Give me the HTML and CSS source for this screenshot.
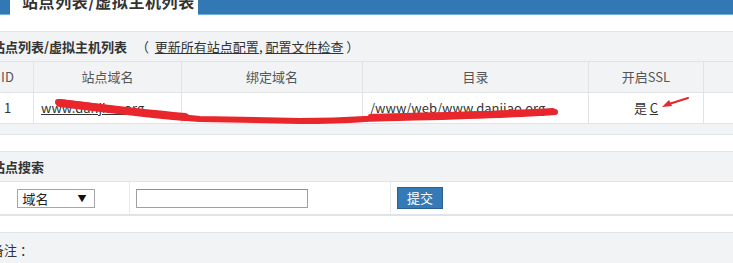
FILE: index.html
```html
<!DOCTYPE html>
<html lang="zh-CN">
<head>
<meta charset="utf-8">
<title>站点列表/虚拟主机列表</title>
<link rel="stylesheet" href="styles.css">
</head>
<body>
<div class="page">
  <div class="topbar">
    <div class="tab">站点列表/虚拟主机列表</div>
  </div>
  <div class="spacer"></div>

  <section class="panel list-panel">
    <div class="panel-title">
      <b>站点列表/虚拟主机列表</b>
      <span class="ops">（&nbsp;&nbsp;<a href="#">更新所有站点配置</a>, <a href="#">配置文件检查</a> ）</span>
    </div>
    <div class="grid">
      <div class="cell head c">ID</div>
      <div class="cell head c">站点域名</div>
      <div class="cell head c">绑定域名</div>
      <div class="cell head c">目录</div>
      <div class="cell head c">开启SSL</div>
      <div class="cell head c"></div>
      <div class="cell data c">1</div>
      <div class="cell data"><a href="#">www.danjiao.org</a></div>
      <div class="cell data"></div>
      <div class="cell data">/www/web/www.danjiao.org</div>
      <div class="cell data c">是 <a href="#">C</a></div>
      <div class="cell data"></div>
    </div>
  </section>

  <div class="spacer2"></div>

  <section class="panel search-panel">
    <div class="panel-title"><b>站点搜索</b></div>
    <div class="search-row">
      <div class="scell sel-cell">
        <div class="select"><span>域名</span><span class="caret">▼</span></div>
      </div>
      <div class="scell"><div class="input"></div></div>
      <div class="scell"><button class="btn" type="button">提交</button></div>
    </div>
  </section>

  <div class="spacer3"></div>

  <section class="panel note-panel">
    <div class="note-title">备注 ：</div>
  </section>
</div>

<svg class="marks" width="733" height="263" viewBox="0 0 733 263" aria-hidden="true">
  <path d="M58,102 C105,107 150,115 200,119 L300,121 C330,121 350,120 365,119 C430,117 500,116 555,112" fill="none" stroke="#e8262b" stroke-width="6" stroke-linecap="round"/>
  <path d="M60,103 C100,108 140,113 185,117" fill="none" stroke="#e8262b" stroke-width="8" stroke-linecap="round"/>
  <path d="M370,116 C440,114 500,113 553,110" fill="none" stroke="#e8262b" stroke-width="4" stroke-linecap="round"/>
  <path d="M669,104 L688,98" fill="none" stroke="#e8262b" stroke-width="2" stroke-linecap="round"/>
  <polygon points="662,107 669,100 672,106" fill="#e8262b"/>
</svg>
</body>
</html>
```

FILE: styles.css
```css
html, body {
  margin: 0;
  padding: 0;
  background: #ffffff;
  overflow: hidden;
}

body {
  font-family: "Noto Sans CJK SC", "Noto Sans", sans-serif;
  font-size: 13px;
  color: #333;
  position: relative;
  width: 733px;
  height: 263px;
}

a {
  color: #333;
  text-decoration: underline;
}

.page {
  margin: -22px 0 0 -18px;
  width: 800px;
}

.topbar {
  height: 36px;
  background: #3278b4;
  border-bottom: 1px solid #6fb0d8;
  display: flex;
  align-items: flex-end;
}

.tab {
  margin-left: 28px;
  width: 188px;
  height: 37px;
  margin-bottom: -1px;
  box-sizing: border-box;
  background: #fff;
  padding: 14px 0 0 12px;
  font-size: 16px;
  line-height: 18px;
  font-weight: bold;
  color: #333;
  letter-spacing: 0.6px;
}

.spacer { height: 16px; }

.panel {
  background: #f2f3f5;
  border-top: 1px solid #e2e3e5;
}

.panel-title {
  height: 29px;
  line-height: 29px;
  padding-left: 10px;
  color: #333;
  display: flex;
  align-items: center;
}

.panel-title b {
  font-weight: bold;
}

.ops {
  margin-left: 9px;
}

.ops a { color: #333; }

.list-panel {
  padding-bottom: 10px;
  border-bottom: 1px solid #e2e3e5;
}

.grid {
  display: grid;
  grid-template-columns: 52px 148px 181px 226px 115px 78px;
  border-top: 1px solid #e2e3e5;
}

.cell {
  height: 30px;
  line-height: 30px;
  border-right: 1px solid #e2e3e5;
  border-bottom: 1px solid #e2e3e5;
  padding: 0 7px;
  white-space: nowrap;
  overflow: hidden;
}

.cell.head {
  background: #f2f3f5;
  color: #555;
}

.cell.data {
  background: #fff;
  color: #333;
}

.cell.c { text-align: center; }

.spacer2 { height: 16px; }

.search-panel {
  border-bottom: 1px solid #e2e3e5;
}

.search-row {
  display: grid;
  grid-template-columns: 148px 261px 1fr;
  background: #fff;
  border-top: 1px solid #e2e3e5;
  border-bottom: 1px solid #e2e3e5;
}

.scell {
  height: 32px;
  display: flex;
  align-items: center;
  padding-left: 6px;
  border-right: 1px solid #e6ebf0;
}

.scell.sel-cell {
  justify-content: center;
  padding-left: 0;
}

.select {
  width: 78px;
  height: 19px;
  box-sizing: border-box;
  border: 1px solid #a6a6a6;
  background: #fff;
  display: flex;
  justify-content: space-between;
  align-items: center;
  padding: 0 7px 0 5px;
  font-size: 13px;
  color: #222;
}

.select .caret {
  font-size: 9px;
  color: #111;
}

.input {
  width: 172px;
  height: 19px;
  box-sizing: border-box;
  border: 1px solid #a0a0a0;
  border-top-color: #8f8f8f;
  background: #fff;
}

.btn {
  width: 46px;
  height: 22px;
  box-sizing: border-box;
  border: 1px solid #2a5f8f;
  background: #337ab7;
  color: #fff;
  font-family: "Noto Sans CJK SC", sans-serif;
  font-size: 13px;
  padding: 0;
  line-height: 20px;
}

.spacer3 {
  height: 16px;
  background: #fff;
}

.note-panel {
  height: 60px;
}

.note-title {
  padding: 8px 0 0 9px;
  line-height: 18px;
  color: #333;
}

.marks {
  position: absolute;
  left: 0;
  top: 0;
  pointer-events: none;
}
```
